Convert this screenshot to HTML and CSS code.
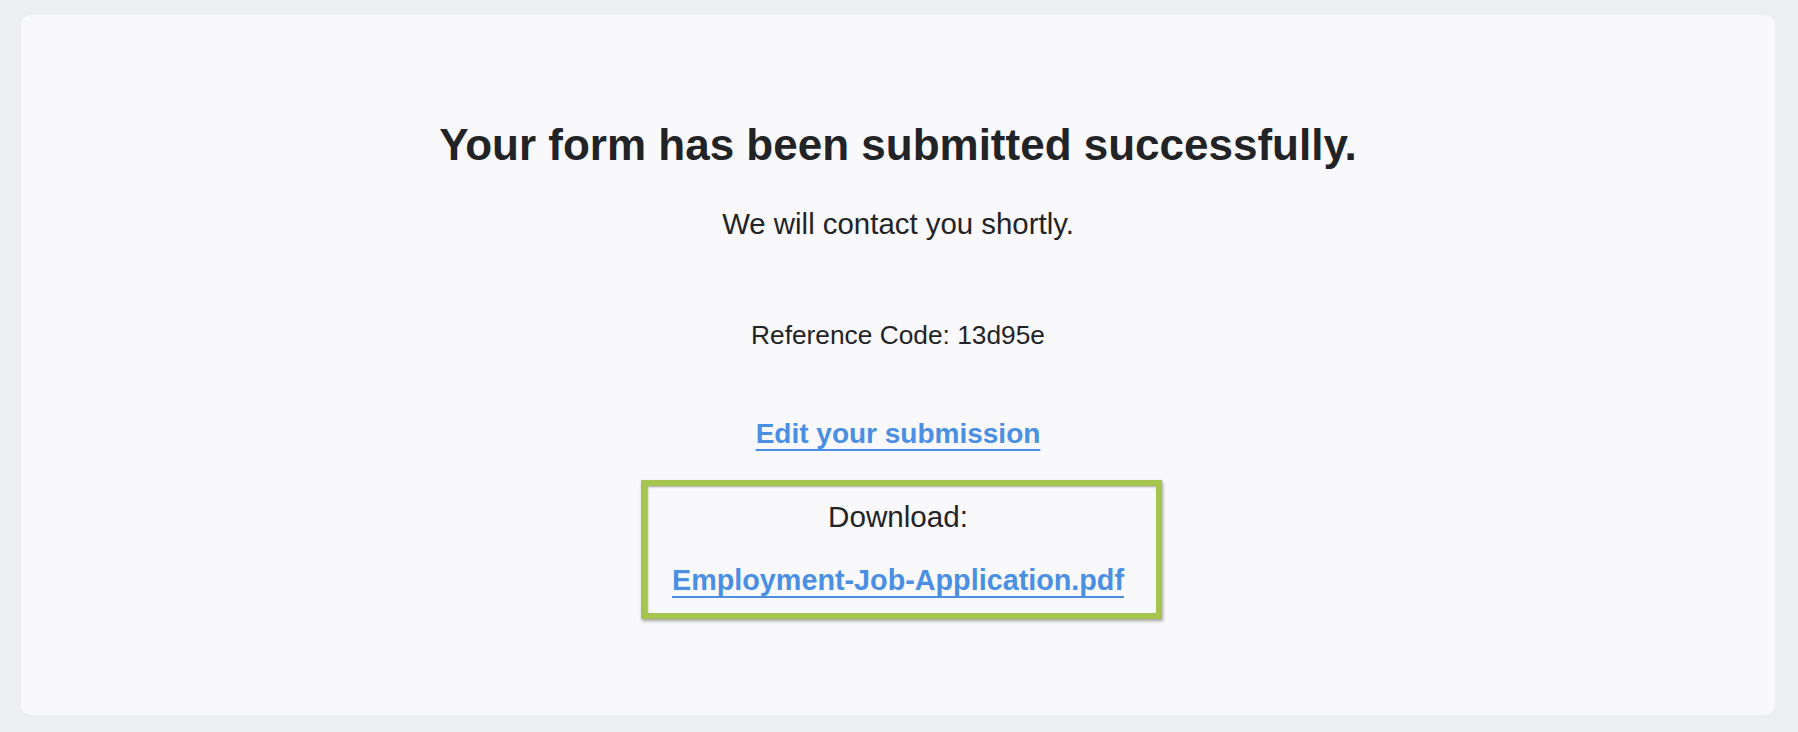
FILE: index.html
```html
<!DOCTYPE html>
<html lang="en">
<head>
<meta charset="utf-8">
<title>Form submitted</title>
<link rel="stylesheet" href="styles.css">
</head>
<body>
  <main class="card">
    <div class="content">
      <h1 class="title">Your form has been submitted successfully.</h1>
      <p class="sub">We will contact you shortly.</p>
      <p class="ref">Reference Code: 13d95e</p>
      <a class="edit link" href="#">Edit your submission</a>
      <div class="download">
        <div class="download-label">Download:</div>
        <a class="file link" href="#">Employment-Job-Application.pdf</a>
      </div>
    </div>
  </main>
</body>
</html>
```

FILE: styles.css
```css
html, body {
  margin: 0;
  padding: 0;
}
body {
  background: #edeef0;
  font-family: "Liberation Sans", Arial, Helvetica, sans-serif;
  color: #222326;
  width: 1798px;
  height: 732px;
  overflow: hidden;
}
.card {
  margin: 15px 23px 0 21px;
  height: 700px;
  background: #f9f9fb;
  border-radius: 10px;
  box-sizing: border-box;
  padding-top: 104px;
}
.content {
  display: flex;
  flex-direction: column;
  align-items: center;
  text-align: center;
}
.title {
  margin: 0;
  font-size: 44px;
  line-height: 52px;
  font-weight: 700;
  color: #222326;
}
.sub {
  margin: 35px 0 0;
  font-size: 29.4px;
  line-height: 36px;
}
.ref {
  margin: 77px 0 0;
  font-size: 26.3px;
  line-height: 32px;
}
.link {
  color: #4a8fe2;
  font-weight: 700;
  text-decoration: underline;
  text-decoration-thickness: 2px;
  text-underline-offset: 6px;
}
.edit {
  margin-top: 66px;
  font-size: 28px;
  line-height: 34px;
}
.download {
  margin-top: 29px;
  margin-left: 7px;
  display: flex;
  flex-direction: column;
  align-items: center;
  border: 6px solid #a5c54f;
  padding: 13px 32px 16px 25px;
  box-shadow: 1px 2px 3px rgba(0, 0, 0, 0.35), inset 1px 1px 2px rgba(0, 0, 0, 0.35);
}
.download-label {
  font-size: 29.6px;
  line-height: 36px;
}
.file {
  margin-top: 28px;
  font-size: 28.75px;
  line-height: 34px;
}
```
